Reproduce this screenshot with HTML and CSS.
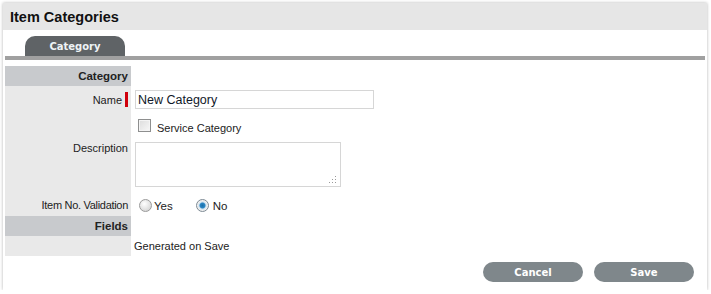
FILE: index.html
```html
<!DOCTYPE html>
<html>
<head>
<meta charset="utf-8">
<link rel="stylesheet" href="styles.css">
</head>
<body>
<div class="panel">
  <div class="header">Item Categories</div>
  <div class="tabs"><div class="tab">Category</div></div>
  <div class="form">
    <div class="lbl sec">Category</div><div class="val"></div>

    <div class="lbl">Name<span class="req"></span></div>
    <div class="val val-input"><input class="text" type="text" value="New Category"></div>

    <div class="lbl"></div>
    <div class="val val-check"><span class="check"></span><span class="check-text">Service Category</span></div>

    <div class="lbl lbl-top">Description</div>
    <div class="val val-ta"><span class="ta-wrap"><textarea class="ta"></textarea><svg class="grip" width="8" height="8" viewBox="0 0 8 8"><rect x="6" y="0" width="1" height="1"/><rect x="6" y="3" width="1" height="1"/><rect x="3" y="3" width="1" height="1"/><rect x="6" y="6" width="1" height="1"/><rect x="3" y="6" width="1" height="1"/><rect x="0" y="6" width="1" height="1"/></svg></span></div>

    <div class="lbl lbl-tight">Item No. Validation</div>
    <div class="val val-radio"><span class="radio"></span><span class="rtext">Yes</span><span class="radio on"></span><span class="rtext">No</span></div>

    <div class="lbl sec">Fields</div><div class="val"></div>

    <div class="lbl"></div>
    <div class="val val-gen">Generated on Save</div>
  </div>
  <div class="actions">
    <button class="btn">Cancel</button>
    <button class="btn">Save</button>
  </div>
</div>
</body>
</html>
```
FILE: styles.css
```css
html, body {
  margin: 0;
  background: #fff;
  font-family: "Liberation Sans", Arial, sans-serif;
  color: #222;
}
.panel {
  margin: 3px 4px 0 3px;
  height: 287px;
  box-shadow: 0 0 3px rgba(0,0,0,0.3);
  display: flex;
  flex-direction: column;
}
.header {
  height: 27px;
  background: #e6e6e6;
  display: flex;
  align-items: center;
  padding-left: 7px;
  font-weight: bold;
  font-size: 14.5px;
  color: #111;
}
.tabs {
  margin: 6px 2px 0;
  border-bottom: 4px solid #a0a0a0;
  padding-left: 20px;
  display: flex;
}
.tab {
  width: 100px;
  height: 20px;
  background: #5f6366;
  border-radius: 10px 10px 0 0;
  color: #eef3f6;
  font-family: "DejaVu Sans", sans-serif;
  font-weight: bold;
  font-size: 10px;
  display: flex;
  align-items: center;
  justify-content: center;
}
.form {
  margin: 6px 2px 0;
  display: grid;
  grid-template-columns: 126px 1fr;
  grid-template-rows: 20px 27px 25px 56px 22px 20px 20px;
}
.lbl {
  background: #e9e9e9;
  font-size: 11px;
  color: #222;
  display: flex;
  align-items: center;
  justify-content: flex-end;
  padding-right: 3px;
}
.lbl.sec {
  background: #c8cacd;
  font-weight: bold;
  font-size: 11.5px;
  color: #222;
}
.lbl-top {
  align-items: flex-start;
  padding-top: 4px;
  line-height: 13px;
}
.lbl-tight {
  letter-spacing: -0.3px;
}
.req {
  width: 3px;
  height: 15px;
  background: #d0000c;
  margin-left: 3px;
}
.val {
  display: flex;
  align-items: center;
  font-size: 11px;
}
.val-input {
  align-items: flex-start;
  padding: 4px 0 0 4px;
}
.text {
  box-sizing: border-box;
  width: 239px;
  height: 19px;
  border: 1px solid #d6d6d6;
  margin: 0;
  padding: 0 2px;
  font-family: "Liberation Sans", Arial, sans-serif;
  font-size: 12.5px;
  color: #101828;
  outline: none;
}
.val-check {
  align-items: flex-start;
  padding: 6px 0 0 7px;
}
.check {
  box-sizing: border-box;
  width: 13px;
  height: 13px;
  border: 1px solid #8e8f8f;
  background: linear-gradient(135deg, #dcdcdc, #f8f8f8);
  box-shadow: inset 0 0 0 1px #f4f4f4;
}
.check-text {
  margin-left: 6px;
  padding-top: 3px;
  font-size: 11px;
  color: #222;
}
.val-ta {
  align-items: flex-start;
  padding: 4px 0 0 4px;
}
.ta-wrap {
  position: relative;
  display: block;
  width: 206px;
  height: 45px;
}
.ta {
  box-sizing: border-box;
  display: block;
  width: 206px;
  height: 45px;
  border: 1px solid #d6d6d6;
  margin: 0;
  padding: 0;
  resize: none;
  outline: none;
}
.grip {
  position: absolute;
  right: 4px;
  bottom: 3px;
  fill: #9a9a9a;
}
.val-radio {
  padding-left: 8px;
}
.radio {
  box-sizing: border-box;
  width: 13px;
  height: 13px;
  border-radius: 50%;
  border: 1px solid #9a9a9a;
  background: radial-gradient(circle at 40% 35%, #ffffff, #d8d8d8 75%);
}
.radio.on {
  margin-left: 23px;
  border-color: #7d8a94;
  background: radial-gradient(circle at 50% 50%, #1a6ea8 0, #2a86c4 2.5px, #cfe2ef 3.5px, #f0f0f0 5px);
}
.rtext {
  margin-left: 2px;
  padding-top: 2px;
  font-size: 11.5px;
  color: #222;
}
.radio.on + .rtext {
  margin-left: 4px;
}
.val-gen {
  padding-left: 3px;
  font-size: 11px;
  color: #222;
}
.actions {
  display: flex;
  justify-content: flex-end;
  gap: 11px;
  margin: 6px 13px 0 0;
}
.btn {
  width: 100px;
  height: 20px;
  border: 0;
  border-radius: 10px;
  background: #7f878b;
  color: #ffffff;
  font-family: "DejaVu Sans", sans-serif;
  font-weight: bold;
  font-size: 10px;
  padding: 0;
}
```
